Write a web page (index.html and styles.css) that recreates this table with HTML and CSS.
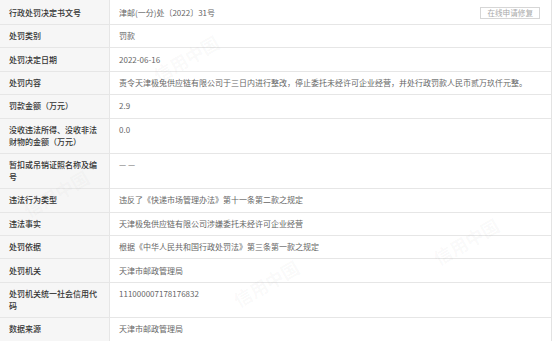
FILE: index.html
```html
<!DOCTYPE html>
<html lang="zh-CN">
<head>
<meta charset="utf-8">
<title>行政处罚</title>
<link rel="stylesheet" href="styles.css">
</head>
<body>
<div class="table">
  <div class="row first">
    <div class="label">行政处罚决定书文号</div>
    <div class="value value-flex"><span>津邮(一分)处〔2022〕31号</span><span class="btn">在线申请修复</span></div>
  </div>
  <div class="row"><div class="label">处罚类别</div><div class="value">罚款</div></div>
  <div class="row"><div class="label">处罚决定日期</div><div class="value">2022-06-16</div></div>
  <div class="row"><div class="label">处罚内容</div><div class="value">责令天津极兔供应链有限公司于三日内进行整改，停止委托未经许可企业经营，并处行政罚款人民币贰万玖仟元整。</div></div>
  <div class="row"><div class="label">罚款金额（万元）</div><div class="value">2.9</div></div>
  <div class="row"><div class="label">没收违法所得、没收非法财物的金额（万元）</div><div class="value">0.0</div></div>
  <div class="row"><div class="label">暂扣或吊销证照名称及编号</div><div class="value">— —</div></div>
  <div class="row"><div class="label">违法行为类型</div><div class="value">违反了《快递市场管理办法》第十一条第二款之规定</div></div>
  <div class="row"><div class="label">违法事实</div><div class="value">天津极兔供应链有限公司涉嫌委托未经许可企业经营</div></div>
  <div class="row"><div class="label">处罚依据</div><div class="value">根据《中华人民共和国行政处罚法》第三条第一款之规定</div></div>
  <div class="row"><div class="label">处罚机关</div><div class="value">天津市邮政管理局</div></div>
  <div class="row"><div class="label">处罚机关统一社会信用代码</div><div class="value">111000007178176832</div></div>
  <div class="row"><div class="label">数据来源</div><div class="value">天津市邮政管理局</div></div>
  <div class="wm wm1">信用中国</div>
  <div class="wm wm2">信用中国</div>
  <div class="wm wm3">信用中国</div>
  <div class="wm wm4">信用中国</div>
</div>
</body>
</html>
```
FILE: styles.css
```css
* { box-sizing: border-box; }
html, body {
  margin: 0;
  padding: 0;
  background: #fff;
}
body {
  font-family: "Noto Sans CJK SC", "Noto Sans", sans-serif;
  font-size: 8px;
  overflow: hidden;
}
.table {
  position: relative;
  width: 552px;
  border-right: 1px solid #e3e3e3;
  overflow: hidden;
}
.row {
  display: grid;
  grid-template-columns: 110px 1fr;
  border-bottom: 1px solid #e6e6e6;
}
.label {
  background: #f6f6f6;
  border-right: 1px solid #e6e6e6;
  color: #333;
  font-weight: 500;
  padding: 5.2px 10px 5.2px 9px;
  line-height: 12px;
}
.value {
  color: #666;
  padding: 5.2px 9px;
  line-height: 12px;
}
.first .label, .first .value {
  padding-top: 6.5px;
  padding-bottom: 5.5px;
}
.value-flex {
  display: flex;
  justify-content: space-between;
  align-items: center;
}
.btn {
  border: 1px solid #d6d6d6;
  color: #aaa;
  font-size: 7.6px;
  line-height: 10px;
  padding: 0 6px;
  margin-right: 2px;
}
.wm {
  position: absolute;
  color: rgba(120, 120, 120, 0.045);
  font-size: 18px;
  font-weight: 700;
  transform: rotate(-30deg);
  pointer-events: none;
  white-space: nowrap;
}
.wm1 { left: 430px; top: 228px; }
.wm2 { left: 150px; top: 45px; }
.wm3 { left: 230px; top: 270px; }
.wm4 { left: 20px; top: 180px; }
```
